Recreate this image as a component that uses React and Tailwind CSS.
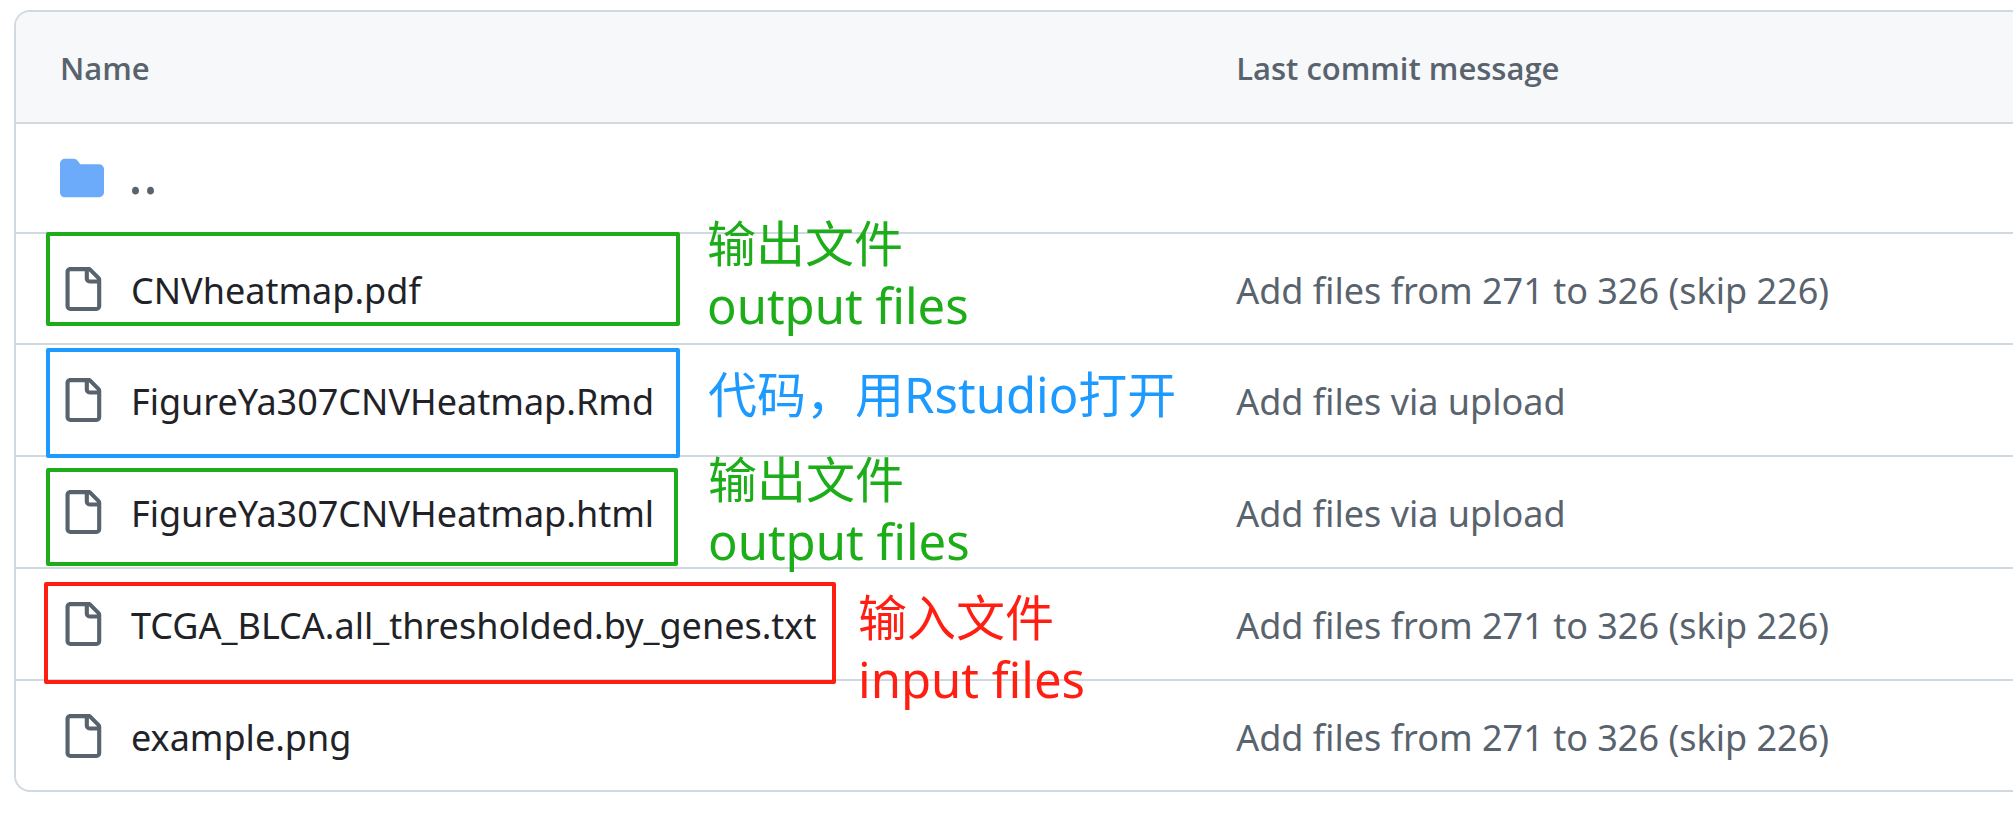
const FILE_PATH =
  "M2 1.75C2 .784 2.784 0 3.75 0h6.586c.464 0 .909.184 1.237.513l2.914 2.914c.329.328.513.773.513 1.237v9.586A1.75 1.75 0 0 1 13.25 16h-9.5A1.75 1.75 0 0 1 2 14.25Zm1.75-.25a.25.25 0 0 0-.25.25v12.5c0 .138.112.25.25.25h9.5a.25.25 0 0 0 .25-.25V6h-2.75A1.75 1.75 0 0 1 9 4.25V1.5Zm6.75.062V4.25c0 .138.112.25.25.25h2.688l-.011-.013-2.914-2.914-.013-.011Z";
const FOLDER_PATH =
  "M1.75 1A1.75 1.75 0 0 0 0 2.75v10.5C0 14.216.784 15 1.75 15h12.5A1.75 1.75 0 0 0 16 13.25v-8.5A1.75 1.75 0 0 0 14.25 3H7.5a.25.25 0 0 1-.2-.1l-.9-1.2C6.07 1.26 5.55 1 5 1H1.75Z";

function Icon({ path, className }) {
  return (
    <svg viewBox="0 0 16 16" fill="currentColor" aria-hidden="true" className={`size-11 shrink-0 ${className}`}>
      <path d={path} />
    </svg>
  );
}

const files = [
  {
    name: "CNVheatmap.pdf",
    message: "Add files from 271 to 326 (skip 226)",
    row: "h-[111px]",
    box: "left-[30px] top-0 w-[634px] h-[94px] border-[#1cad19]",
    note: ["输出文件", "output files"],
    noteClass: "left-[691px] -top-[22px] text-[#1cad19]",
  },
  {
    name: "FigureYa307CNVHeatmap.Rmd",
    message: "Add files via upload",
    row: "h-[112px]",
    box: "left-[30px] top-[5px] w-[634px] h-[110px] border-[#1c9aff]",
    note: ["代码，用Rstudio打开"],
    noteClass: "left-[692px] top-[18px] text-[#1c9aff]",
  },
  {
    name: "FigureYa307CNVHeatmap.html",
    message: "Add files via upload",
    row: "h-[112px]",
    box: "left-[30px] top-[13px] w-[632px] h-[98px] border-[#1cad19]",
    note: ["输出文件", "output files"],
    noteClass: "left-[692px] -top-[9px] text-[#1cad19]",
  },
  {
    name: "TCGA_BLCA.all_thresholded.by_genes.txt",
    message: "Add files from 271 to 326 (skip 226)",
    row: "h-[112px]",
    box: "left-[28px] top-[15px] w-[792px] h-[102px] border-[#ff1f12]",
    note: ["输入文件", "input files"],
    noteClass: "left-[842px] top-[17px] text-[#ff1f12]",
  },
  {
    name: "example.png",
    message: "Add files from 271 to 326 (skip 226)",
    row: "h-[111px]",
  },
];

export default function App() {
  return (
    <main className="min-h-screen overflow-hidden bg-white pt-[10px] pl-[14px] font-['Noto_Sans','Noto_Sans_CJK_SC',sans-serif] text-[#59636e]">
      <div className="rounded-l-[16px] border-2 border-r-0 border-[#d1d9e0]">
        <table className="w-full table-fixed border-separate border-spacing-0 text-left">
          <thead>
            <tr className="h-[110px] font-['Open_Sans',sans-serif] text-[31px] leading-10">
              <th scope="col" className="w-[61%] rounded-tl-[14px] bg-[#f6f8fa] pt-0.5 pl-11 font-semibold">
                Name
              </th>
              <th scope="col" className="bg-[#f6f8fa] pt-0.5 pl-0.5 font-semibold">
                Last commit message
              </th>
            </tr>
          </thead>
          <tbody className="text-[36px] leading-[48px]">
            <tr className="h-[110px]">
              <td colSpan={2} className="border-t-2 border-[#d1d9e0] pl-11">
                <a href="#parent" aria-label="Parent directory" className="flex items-center gap-6">
                  <Icon path={FOLDER_PATH} className="text-[#6babfa]" />
                  <span className="pb-3 text-[56px] leading-[48px]">..</span>
                </a>
              </td>
            </tr>
            {files.map((file) => (
              <tr key={file.name} className={file.row}>
                <td className="relative border-t-2 border-[#d1d9e0] pl-11">
                  <div className="flex items-center gap-[27px]">
                    <Icon path={FILE_PATH} className="text-[#59636e]" />
                    <a href={`#${file.name}`} className="pt-1 whitespace-nowrap text-[#1f2328]">
                      {file.name}
                    </a>
                  </div>
                  {file.note && (
                    <>
                      <div className={`pointer-events-none absolute z-10 -mt-0.5 rounded-[2px] border-4 ${file.box}`} />
                      <p className={`absolute z-10 text-[49px] leading-[62px] whitespace-nowrap ${file.noteClass}`}>
                        {file.note.map((line) => (
                          <span key={line} className="block">
                            {line}
                          </span>
                        ))}
                      </p>
                    </>
                  )}
                </td>
                <td className="border-t-2 border-[#d1d9e0] pl-0.5">
                  <div className="pt-1 whitespace-nowrap">{file.message}</div>
                </td>
              </tr>
            ))}
          </tbody>
        </table>
      </div>
    </main>
  );
}
